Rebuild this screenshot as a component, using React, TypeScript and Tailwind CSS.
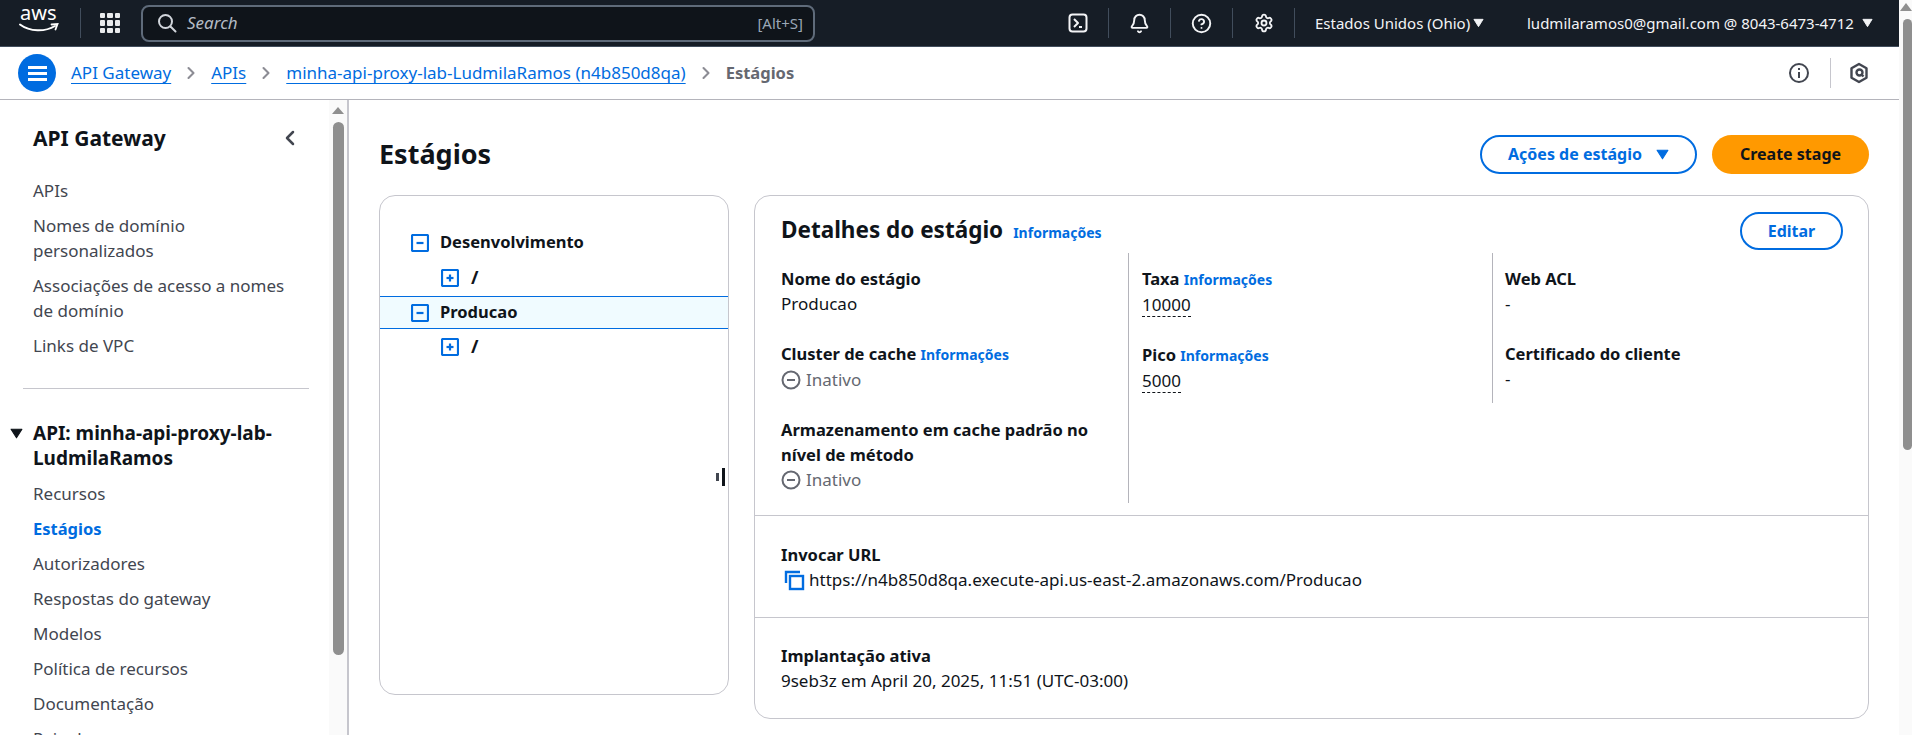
import { Bell, ChevronLeft, ChevronRight, CircleHelp, Settings } from 'lucide-react'
import type { ReactNode } from 'react'

const blue = 'text-[#006ce0]'

function AwsLogo() {
  return (
    <svg width="40" height="26" viewBox="0 0 40 26" className="shrink-0 overflow-visible -mt-[4px]">
      <text x="1" y="12" fontSize="20" fill="#fff" fontFamily="'Noto Sans', sans-serif">aws</text>
      <path d="M1 16.500c10 7.500 25 7.500 35 1.500" fill="none" stroke="#fff" strokeWidth="2" strokeLinecap="round" />
      <path d="M32.500 16.500l6-.500-2 5.500" fill="none" stroke="#fff" strokeWidth="1.800" strokeLinecap="round" />
    </svg>
  )
}

function GridIcon() {
  return (
    <div className="grid grid-cols-3 gap-[2px] w-5 h-5 shrink-0">
      {Array.from({ length: 9 }).map((_, i) => (
        <span key={i} className="bg-[#e9ebed] rounded-[1px]" />
      ))}
    </div>
  )
}

function SearchIcon() {
  return (
    <svg width="20" height="20" viewBox="0 0 20 20" fill="none" stroke="#d1d5db" strokeWidth="2">
      <circle cx="8.500" cy="8.500" r="6.500" />
      <path d="M13.500 13.500 18.500 18.500" strokeLinecap="round" />
    </svg>
  )
}

function ConsoleIcon() {
  return (
    <svg width="20" height="20" viewBox="0 0 20 20" fill="none" stroke="#f3f4f6" strokeWidth="2">
      <rect x="1.500" y="1.500" width="17" height="17" rx="3" />
      <path d="m6 6 4 4-4 4" strokeLinejoin="round" />
      <path d="M11 14h3" />
    </svg>
  )
}

function Sep() {
  return <span className="w-px h-[30px] bg-[#414d5c] shrink-0" />
}

function TopIcon({ children }: { children: ReactNode }) {
  return <div className="w-[61px] flex justify-center shrink-0">{children}</div>
}

function Caret({ className }: { className: string }) {
  return (
    <svg width="12" height="10" viewBox="0 0 12 10" className={className}>
      <path d="M1 1h10L6 9z" fill="currentColor" stroke="currentColor" strokeLinejoin="round" />
    </svg>
  )
}

function TopBar() {
  return (
    <header className="h-[47px] bg-[#161d26] border-b border-[#414d5c] flex items-center pl-[19px] text-white shrink-0">
      <AwsLogo />
      <span className="w-px h-[30px] bg-[#414d5c] ml-[21px] mr-[19px]" />
      <GridIcon />
      <div className="ml-[21px] w-[674px] h-[37px] rounded-lg border-2 border-[#5f6b7a] bg-[#0f141a] flex items-center pl-[14px] pr-[10px]">
        <SearchIcon />
        <span className="ml-[10px] italic text-[#b4bbc4] text-[17px]">Search</span>
        <span className="ml-auto text-[#9ba7b6] text-[15px]">[Alt+S]</span>
      </div>
      <div className="ml-[232px] flex items-center">
        <TopIcon><ConsoleIcon /></TopIcon>
        <Sep />
        <TopIcon><Bell size={21} strokeWidth={2.200} className="text-[#f3f4f6]" /></TopIcon>
        <Sep />
        <TopIcon><CircleHelp size={21} strokeWidth={2.200} className="text-[#f3f4f6]" /></TopIcon>
        <Sep />
        <TopIcon><Settings size={20} strokeWidth={2.200} className="text-[#f3f4f6]" /></TopIcon>
        <Sep />
        <span className="ml-[20px] text-[15px] text-[#f3f4f6] w-[153px] whitespace-nowrap">Estados Unidos (Ohio)</span>
        <Caret className="text-[#f3f4f6] ml-[5px] w-[11px]" />
        <span className="ml-[22px] mr-[21px]"><Sep /></span>
        <span className="text-[15px] text-[#f3f4f6] w-[335px] whitespace-nowrap">ludmilaramos0@gmail.com @ 8043-6473-4712</span>
        <Caret className="text-[#f3f4f6] w-[11px]" />
      </div>
    </header>
  )
}

function Crumb({ children }: { children: ReactNode }) {
  return <a className={`${blue} underline underline-offset-[4px] whitespace-nowrap`}>{children}</a>
}

function BreadcrumbBar() {
  const chevron = <ChevronRight size={20} strokeWidth={2.500} className="text-[#8c8c94] mx-[10px] shrink-0" />
  return (
    <div className="h-[53px] bg-white border-b border-[#b4b4bb] flex items-center pl-[18px] pr-[30px] text-[17px] shrink-0">
      <button className="w-[38px] h-[38px] rounded-full bg-[#006ce0] flex flex-col items-center justify-center gap-[3px] mr-[15px] shrink-0">
        <span className="w-[19px] h-[3px] bg-white" />
        <span className="w-[19px] h-[3px] bg-white" />
        <span className="w-[19px] h-[3px] bg-white" />
      </button>
      <Crumb>API Gateway</Crumb>
      {chevron}
      <Crumb>APIs</Crumb>
      {chevron}
      <Crumb>minha-api-proxy-lab-LudmilaRamos (n4b850d8qa)</Crumb>
      {chevron}
      <span className="font-bold text-[#656871] text-[16.500px]">Estágios</span>
      <div className="ml-auto flex items-center">
        <svg width="22" height="22" viewBox="0 0 22 22" fill="none" stroke="#424650" strokeWidth="2">
          <circle cx="11" cy="11" r="9" />
          <path d="M11 10v6M11 6v2" />
        </svg>
        <span className="w-px h-[30px] bg-[#c6c6cd] ml-[20px] mr-[18px]" />
        <svg width="20" height="22" viewBox="0 0 20 22" fill="none" stroke="#424650" strokeWidth="2.400">
          <path d="M10 2 17.500 6.200v9.600L10 20l-7.500-4.200V6.200z" strokeLinejoin="round" />
          <circle cx="10.500" cy="10.500" r="3" />
          <path d="m12.500 12.500 2 2" />
        </svg>
      </div>
    </div>
  )
}

function NavItem({ children, active }: { children: ReactNode; active?: boolean }) {
  return (
    <li className={active ? `${blue} font-bold text-[16.500px]` : 'text-[#424650]'}>{children}</li>
  )
}

function Sidebar() {
  return (
    <aside className="w-[349px] shrink-0 border-r-2 border-[#c6c6cd] flex overflow-hidden">
      <div className="w-[329px] shrink-0 text-[17px] leading-[25px]">
        <div className="flex items-center justify-between pl-[33px] pr-[27px] pt-[24px]">
          <h2 className="text-[21px] leading-[28px] font-bold text-[#0f141a]">API Gateway</h2>
          <ChevronLeft size={24} strokeWidth={2.500} className="text-[#424650]" />
        </div>
        <ul className="pl-[33px] w-[295px] mt-[26px] flex flex-col gap-[10px]">
          <NavItem>APIs</NavItem>
          <NavItem>Nomes de domínio personalizados</NavItem>
          <NavItem>Associações de acesso a nomes de domínio</NavItem>
          <NavItem>Links de VPC</NavItem>
        </ul>
        <hr className="mx-[23px] mt-[30px] border-[#c6c6cd] w-[286px]" />
        <div className="mt-[32px] flex items-start pr-[20px]">
          <Caret className="w-[13px] h-[11px] text-[#0f141a] ml-[10px] mr-[10px] mt-[7px] shrink-0" />
          <span className="font-bold text-[19px] text-[#0f141a]">API: minha-api-proxy-lab-LudmilaRamos</span>
        </div>
        <ul className="pl-[33px] mt-[10px] flex flex-col gap-[10px] whitespace-nowrap">
          <NavItem>Recursos</NavItem>
          <NavItem active>Estágios</NavItem>
          <NavItem>Autorizadores</NavItem>
          <NavItem>Respostas do gateway</NavItem>
          <NavItem>Modelos</NavItem>
          <NavItem>Política de recursos</NavItem>
          <NavItem>Documentação</NavItem>
          <NavItem>Painel</NavItem>
        </ul>
      </div>
      <div className="w-[18px] bg-[#fafafa] flex flex-col items-center pt-[7px] shrink-0">
        <span className="w-0 h-0 border-x-[6px] border-x-transparent border-b-[7px] border-b-[#8f8f8f]" />
        <span className="w-[11px] h-[533px] mt-[8px] bg-[#8f8f8f] rounded-full" />
      </div>
    </aside>
  )
}

function TreeBox({ sign }: { sign: 'minus' | 'plus' }) {
  return (
    <svg width="18" height="18" viewBox="0 0 18 18" fill="none" stroke="#006ce0" strokeWidth="2.200" className="shrink-0">
      <rect x="1" y="1" width="16" height="16" rx="1" />
      <path d="M5.500 9h7" />
      {sign === 'plus' && <path d="M9 5.500v7" />}
    </svg>
  )
}

function StageTree() {
  const slash = (
    <div className="h-[35px] flex items-center pl-[61px]">
      <TreeBox sign="plus" />
      <span className="ml-3 font-bold text-[18px] text-[#0f141a]">/</span>
    </div>
  )
  return (
    <section className="relative w-[350px] h-[500px] border border-[#c6c6cd] rounded-2xl pt-[29px] text-[16.500px] shrink-0">
      <div className="h-[35px] flex items-center pl-[31px]">
        <TreeBox sign="minus" />
        <span className="ml-[11px] font-bold text-[#0f141a]">Desenvolvimento</span>
      </div>
      {slash}
      <div className="h-[33px] mt-px flex items-center pl-[31px] bg-[#f0fbff] border-y border-[#006ce0]">
        <TreeBox sign="minus" />
        <span className="ml-[11px] font-bold text-[#0f141a]">Producao</span>
      </div>
      {slash}
      {/* resize grip on the panel edge */}
      <div className="absolute right-[3px] top-[272px] flex items-center gap-[3px]">
        <span className="w-[3px] h-[8px] bg-[#424650]" />
        <span className="w-[3px] h-[18px] bg-[#0f141a]" />
      </div>
    </section>
  )
}

function InfoLink() {
  return <a className={`${blue} text-[14px] font-bold`}>Informações</a>
}

function Field({ label, info, children }: { label: string; info?: boolean; children: ReactNode }) {
  return (
    <div>
      <div className="font-bold text-[16.500px] text-[#0f141a]">
        {label} {info && <InfoLink />}
      </div>
      <div className="text-[#0f141a]">{children}</div>
    </div>
  )
}

function Inactive() {
  return (
    <span className="flex items-center gap-[5px] text-[#656871]">
      <svg width="20" height="20" viewBox="0 0 20 20" fill="none" stroke="#656871" strokeWidth="2">
        <circle cx="10" cy="10" r="8.500" />
        <path d="M6 10h8" />
      </svg>
      Inativo
    </span>
  )
}

function Dashed({ children }: { children: ReactNode }) {
  return <span className="border-b border-dashed border-[#0f141a] inline-block leading-[22px]">{children}</span>
}

function StageDetails() {
  return (
    <section className="w-[1115px] h-[524px] border border-[#c6c6cd] rounded-2xl text-[17px] leading-[25px] shrink-0 flex flex-col">
      <div className="flex items-start justify-between pl-[26px] pr-[25px] pt-[16px] h-[57px]">
        <div className="flex items-baseline gap-[10px] pt-[2px]">
          <h2 className="text-[22.500px] leading-[32px] font-bold text-[#0f141a]">Detalhes do estágio</h2>
          <InfoLink />
        </div>
        <button className={`w-[103px] h-[38px] rounded-full border-2 border-[#006ce0] ${blue} text-[16px] font-bold`}>Editar</button>
      </div>
      <div className="grid grid-cols-[348px_364px_1fr] pl-[26px] h-[250px]">
        <div className="flex flex-col gap-[25px] pt-[13px] pr-[20px] border-r border-[#b4b4bb]">
          <Field label="Nome do estágio">Producao</Field>
          <Field label="Cluster de cache" info><Inactive /></Field>
          <Field label="Armazenamento em cache padrão no nível de método"><Inactive /></Field>
        </div>
        <div className="flex flex-col gap-[25px] pt-[13px] pl-[13px] h-[150px] border-r border-[#b4b4bb]">
          <Field label="Taxa" info><Dashed>10000</Dashed></Field>
          <Field label="Pico" info><Dashed>5000</Dashed></Field>
        </div>
        <div className="flex flex-col gap-[25px] pt-[13px] pl-[12px]">
          <Field label="Web ACL">-</Field>
          <Field label="Certificado do cliente">-</Field>
        </div>
      </div>
      <div className="mt-[12px] h-[102px] border-t border-[#c6c6cd] pl-[26px] pt-[26px]">
        <div className="font-bold text-[16.500px] text-[#0f141a]">Invocar URL</div>
        <div className="flex items-center text-[#0f141a]">
          <svg width="22" height="22" viewBox="0 0 22 22" fill="none" stroke="#006ce0" strokeWidth="2.400" className="ml-[3px] mr-[3px] shrink-0">
            <path d="M2 14V3h14" />
            <rect x="6" y="7" width="13" height="13" />
          </svg>
          https://n4b850d8qa.execute-api.us-east-2.amazonaws.com/Producao
        </div>
      </div>
      <div className="border-t border-[#c6c6cd] pl-[26px] pt-[25px]">
        <div className="font-bold text-[16.500px] text-[#0f141a]">Implantação ativa</div>
        <div className="text-[#0f141a]">9seb3z em April 20, 2025, 11:51 (UTC-03:00)</div>
      </div>
    </section>
  )
}

export default function App() {
  return (
    <div className="h-[735px] w-[1912px] overflow-hidden flex bg-white font-['Noto_Sans',sans-serif]">
      <div className="w-[1899px] flex flex-col shrink-0">
        <TopBar />
        <BreadcrumbBar />
        <div className="flex flex-1 min-h-0">
          <Sidebar />
          <main className="flex-1 pl-[30px] pt-[34px] pr-[30px]">
            <div className="flex items-center justify-between h-[40px]">
              <h1 className="text-[27px] font-bold text-[#0f141a]">Estágios</h1>
              <div className="flex gap-[15px] text-[16px] font-bold">
                <button className={`w-[217px] h-[39px] rounded-full border-2 border-[#006ce0] ${blue} flex items-center justify-center gap-[14px]`}>
                  Ações de estágio
                  <Caret className="w-[13px] h-[11px]" />
                </button>
                <button className="w-[157px] h-[39px] rounded-full bg-[#ff9900] text-[#0f141a]">Create stage</button>
              </div>
            </div>
            <div className="flex gap-[25px] mt-[21px]">
              <StageTree />
              <StageDetails />
            </div>
          </main>
        </div>
      </div>
      <div className="w-[13px] flex flex-col items-end bg-[#fafafa] pt-[3px] shrink-0">
        <span className="w-0 h-0 mr-[0px] border-x-[6px] border-x-transparent border-b-[8px] border-b-[#8f8f8f]" />
        <span className="w-[9px] h-[431px] mt-[8px] bg-[#8f8f8f] rounded-full" />
      </div>
    </div>
  )
}
